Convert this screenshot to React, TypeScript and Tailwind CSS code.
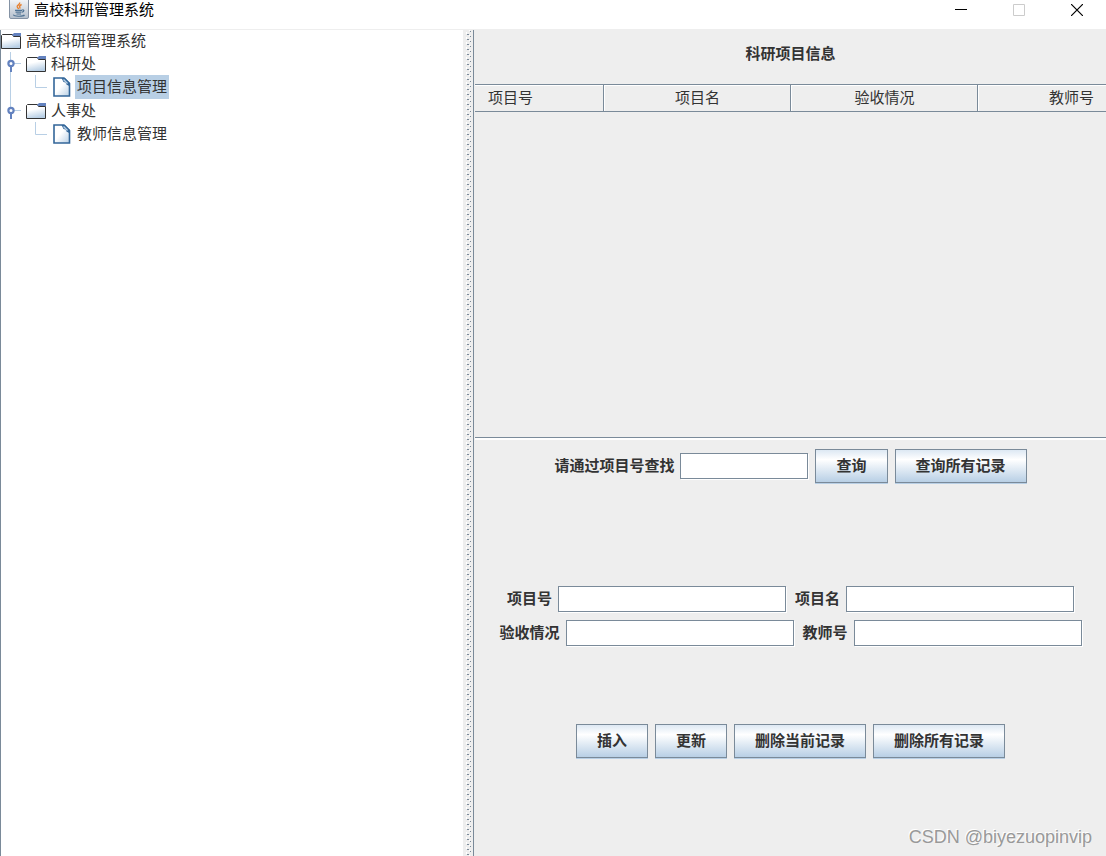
import { useState } from 'react';

const tree = [
  { name: '科研处', leaf: '项目信息管理' },
  { name: '人事处', leaf: '教师信息管理' },
];

const columns = ['项目号', '项目名', '验收情况', '教师号'];

const JavaIcon = () => (
  <svg width="20" height="20" viewBox="0 0 20 20" fill="none">
    <defs>
      <linearGradient id="java-bg" x1="0" y1="0" x2="0" y2="1">
        <stop offset="0" stopColor="#f8f9fb" />
        <stop offset="1" stopColor="#b4bfcc" />
      </linearGradient>
    </defs>
    <rect x="0.5" y="-2" width="19" height="20.5" rx="1.5" fill="url(#java-bg)" stroke="#8492a4" />
    <path d="M10.600 2.500c.8 2-2.700 2.500-2.400 4.200.2 1 1.200 1.400 1.300 2.400M12.600 4.500c-1.200.6-2.400 1.200-1.900 2.400.3.600.5 1.100-.1 1.700" stroke="#e8802e" strokeWidth="1.400" />
    <path d="M6 10.300h7M6.500 12.200h6M7.500 14h4.500M13.200 10c2.200-.4 2.200 1.800-.2 2.200" stroke="#4f7394" strokeWidth="1.200" />
    <path d="M4.500 14.600c-.5 2 9.500 2.200 11 .4" stroke="#4f7394" strokeWidth="1.200" />
  </svg>
);

const FolderIcon = () => (
  <svg width="20" height="16" viewBox="0 0 20 16" className="shrink-0">
    <defs>
      <linearGradient id="folder-bg" x1="0.2" y1="0" x2="0.5" y2="1">
        <stop offset="0.350" stopColor="#ffffff" />
        <stop offset="1" stopColor="#b8cfe5" />
      </linearGradient>
    </defs>
    <path d="M1 2h11v2h7v11H1z" fill="url(#folder-bg)" />
    <path d="M0.500 15.500V2.500L1.500 1.500H11.500L12.500 3.500H19.500V15.500Z" fill="none" stroke="#333333" />
    <path d="M11 2l2-2h7v3h-8z" fill="#6382bf" />
  </svg>
);

const FileIcon = () => (
  <svg width="18" height="20" viewBox="0 0 18 20" className="shrink-0">
    <defs>
      <linearGradient id="file-bg" x1="0" y1="0" x2="1" y2="1">
        <stop offset="0.450" stopColor="#ffffff" />
        <stop offset="1" stopColor="#b8cfe5" />
      </linearGradient>
    </defs>
    <path d="M1 1h10L16.500 6.500V19H1z" fill="url(#file-bg)" stroke="#336699" strokeWidth="1.600" />
    <path d="M8.500 1l2 4 2 .5 1 2 3.500 2V6l-5-5z" fill="#336699" />
    <path d="M10.500 2.500l4 4" stroke="#b8cfe5" strokeWidth="1.400" />
  </svg>
);

const BranchLines = ({ last }: { last: boolean }) => (
  <svg width="25" height="24" viewBox="0 0 25 24" className="shrink-0">
    <path d={last ? 'M9.500 0V11' : 'M9.500 0V24'} stroke="#b8cfe5" />
    <path d="M13 11.500H20" stroke="#b8cfe5" />
    <path d="M10 14V20" stroke="#6382bf" strokeWidth="2" />
    <circle cx="10" cy="11.500" r="2.600" fill="#ffffff" stroke="#6382bf" strokeWidth="2.200" />
  </svg>
);

const LeafLines = ({ last }: { last: boolean }) => (
  <svg width="52" height="24" viewBox="0 0 52 24" className="shrink-0">
    {!last && <path d="M9.500 0V24" stroke="#b8cfe5" />}
    <path d="M34.500 0V12.500H46" fill="none" stroke="#b8cfe5" />
  </svg>
);

const Field = ({ id, label, short }: { id: string; label: string; short?: boolean }) => (
  <div className="flex items-center gap-[6px]">
    <label htmlFor={id} className="shrink-0 font-semibold">{label}</label>
    <input
      id={id}
      type="text"
      className={`${short ? 'w-32' : 'w-[228px]'} h-[26px] border border-[#7a8a99] bg-white px-1 shadow-[1px_1px_0_#ffffff] outline-none`}
    />
  </div>
);

const Button = ({ children }: { children: string }) => (
  <button
    type="button"
    className="h-[34px] shrink-0 border border-[#7a8a99] bg-linear-to-b from-[#dde8f3] via-white via-30% to-[#b8cfe5] px-5 font-semibold shadow-[0_1px_0_#b8cfe5]"
  >
    {children}
  </button>
);

export default function App() {
  const [selected, setSelected] = useState('项目信息管理');

  return (
    <div className="relative flex min-h-screen flex-col bg-[#eeeeee] font-['Liberation_Sans','Noto_Sans_CJK_SC',sans-serif] text-[15px] leading-5 text-[#333333]">
      {/* Title bar */}
      <header className="flex h-[30px] items-start border-b border-[#eeeeee] bg-white pl-[9px] text-black">
        <JavaIcon />
        <h1 className="ml-[5px] flex-1">高校科研管理系统</h1>
        <div className="flex">
          <button type="button" aria-label="最小化" className="flex h-5 w-[58px] items-center justify-center">
            <svg width="12" height="12" viewBox="0 0 12 12"><path d="M0 5.500H12" stroke="#000000" /></svg>
          </button>
          <button type="button" aria-label="最大化" disabled className="flex h-5 w-[58px] items-center justify-center">
            <svg width="12" height="12" viewBox="0 0 12 12"><path d="M0.500 0.500H11.500V11.500H0.500Z" fill="none" stroke="#cccccc" /></svg>
          </button>
          <button type="button" aria-label="关闭" className="flex h-5 w-[58px] items-center justify-center">
            <svg width="12" height="12" viewBox="0 0 12 12"><path d="M0 0L12 12M12 0L0 12" stroke="#000000" strokeWidth="1.200" /></svg>
          </button>
        </div>
      </header>

      <div className="grid flex-1 grid-cols-[minmax(0,463fr)_10px_minmax(0,633fr)]">
        {/* Navigation tree */}
        <nav className="border-l border-[#7a8a99] bg-white">
          <div className="flex h-[22px] items-center gap-[5px]">
            <FolderIcon />
            <span>高校科研管理系统</span>
          </div>
          <ul>
            {tree.map((node, i) => (
              <li key={node.name}>
                <div className="flex h-[23px] items-center">
                  <BranchLines last={i === tree.length - 1} />
                  <FolderIcon />
                  <span className="ml-[5px]">{node.name}</span>
                </div>
                <div className="flex h-6 items-center">
                  <LeafLines last={i === tree.length - 1} />
                  <FileIcon />
                  <button
                    type="button"
                    onClick={() => setSelected(node.leaf)}
                    className={`ml-1 h-full px-[2px] ${selected === node.leaf ? 'bg-[#b8cfe5]' : ''}`}
                  >
                    {node.leaf}
                  </button>
                </div>
              </li>
            ))}
          </ul>
        </nav>

        {/* Split pane divider */}
        <div className="relative">
          <svg className="absolute inset-0 h-full w-full">
            <defs>
              <pattern id="bumps" width="10" height="5" patternUnits="userSpaceOnUse">
                <path d="M3 2h1v2H3zM6 0h1v1H6z" fill="#ffffff" />
                <path d="M4 4h2v1H4zM7 1h1v1H7z" fill="#7a8a99" />
              </pattern>
            </defs>
            <rect width="100%" height="100%" fill="url(#bumps)" />
          </svg>
        </div>

        <main className="flex flex-col border-l border-[#7a8a99] pl-px">
          <h2 className="h-[54px] pt-[14px] text-center font-semibold">科研项目信息</h2>

          <div className="flex h-[354px] justify-center overflow-hidden border-y border-[#7a8a99] shadow-[0_2px_0_#ffffff]">
            <table className="h-[27px] w-[748px] shrink-0 table-fixed border-separate border-spacing-0">
              <thead>
                <tr>
                  {columns.map(col => (
                    <th key={col} className="h-[27px] border-r border-b border-[#7a8a99] p-0 pl-[2px] font-normal shadow-[inset_1px_1px_0_#ffffff]">
                      {col}
                    </th>
                  ))}
                </tr>
              </thead>
              <tbody />
            </table>
          </div>

          <div className="grid flex-1 grid-rows-3">
            <form className="flex items-center justify-center gap-[7px] self-start pt-[11px]">
              <Field id="search" label="请通过项目号查找" short />
              <Button>查询</Button>
              <Button>查询所有记录</Button>
            </form>
            <form className="flex flex-col gap-2 pt-[9px]">
              <div className="flex items-center justify-center gap-[9px]">
                <Field id="project-no" label="项目号" />
                <Field id="project-name" label="项目名" />
              </div>
              <div className="flex items-center justify-center gap-[9px]">
                <Field id="acceptance" label="验收情况" />
                <Field id="teacher-no" label="教师号" />
              </div>
            </form>
            <div className="flex items-start justify-center gap-[7px] pt-[7px]">
              <Button>插入</Button>
              <Button>更新</Button>
              <Button>删除当前记录</Button>
              <Button>删除所有记录</Button>
            </div>
          </div>
        </main>
      </div>

      <p className="absolute right-[14px] bottom-[7px] font-['Liberation_Sans',sans-serif] text-lg leading-6 text-[#999999] [text-shadow:-1px_-1px_0_#ffffff]">
        CSDN @biyezuopinvip
      </p>
    </div>
  );
}
